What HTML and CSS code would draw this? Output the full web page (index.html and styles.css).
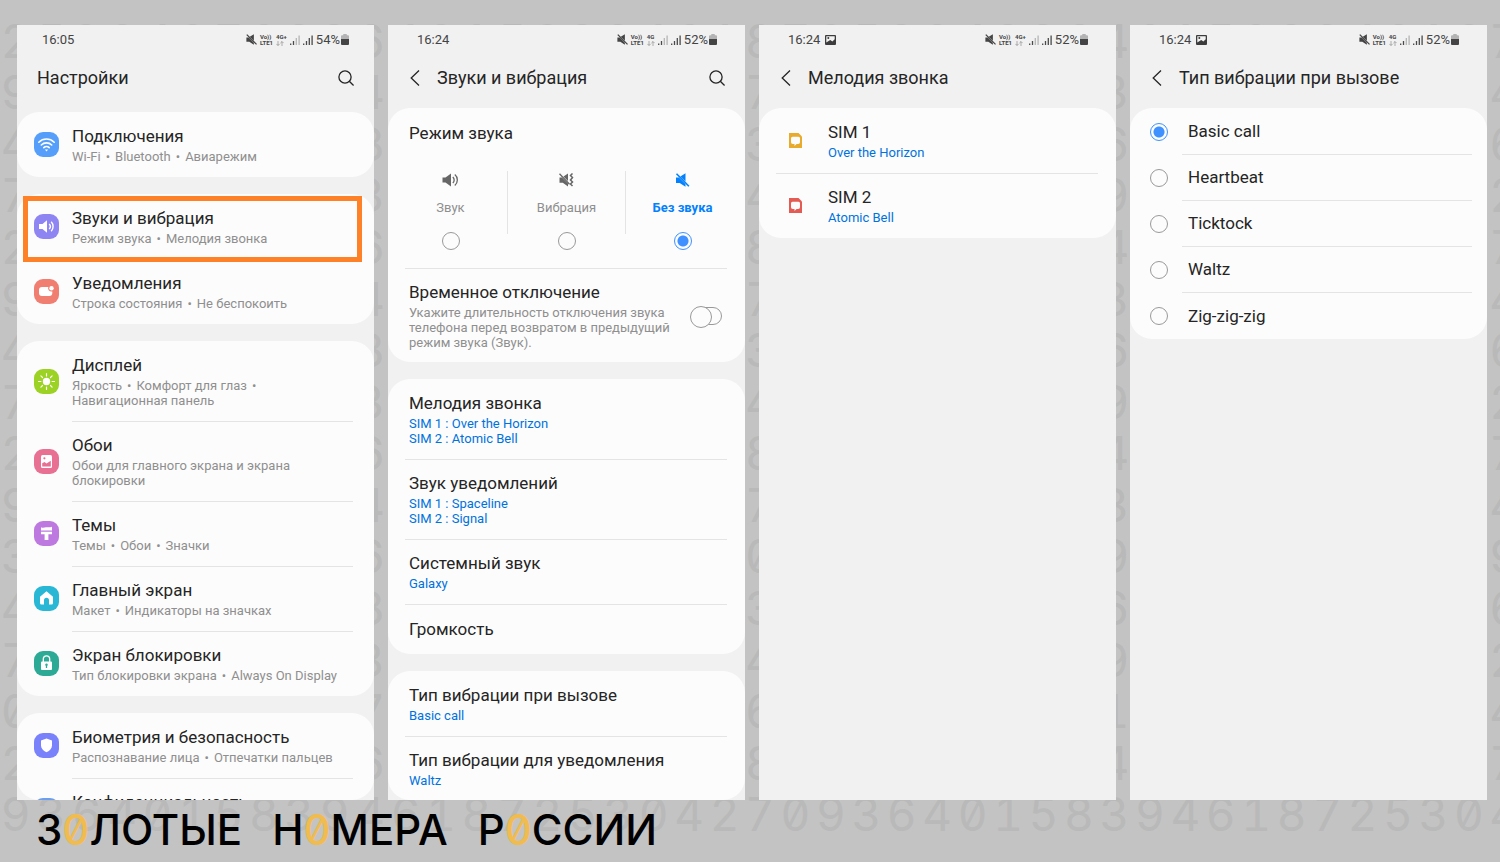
FILE: index.html
```html
<!DOCTYPE html>
<html lang="ru">
<head>
    <meta charset="UTF-8">
    <meta name="viewport" content="width=device-width, initial-scale=1.0">
    <title>Звуки и вибрация</title>
    <link rel="stylesheet" href="styles.css">
</head>
<body>
    <!-- Shared icons -->
    <svg class="sprite" aria-hidden="true">
        <symbol id="mute" viewBox="0 0 14 14">
            <path d="M0.5 4.6h3L10 11v2.8L4.2 10H0.5z" fill="currentColor"/>
            <path d="M4.8 3.6L10 0.2v8.4z" fill="currentColor"/>
            <path d="M1 0.8l12.4 12.4" stroke="currentColor" stroke-width="1.6"/>
        </symbol>
        <symbol id="signal" viewBox="0 0 10 10">
            <path d="M0.7 10V8.4M3.5 10V6" stroke="#4a4a4a" stroke-width="1.3"/>
            <path d="M6.3 10V3M9.1 10V0.5" stroke="currentColor" stroke-width="1.3"/>
        </symbol>
        <symbol id="arrows" viewBox="0 0 8 5">
            <path d="M2 0v4.4M0.4 2.9L2 4.5l1.6-1.6M6 5V0.6M4.4 2.1L6 0.5l1.6 1.6" fill="none" stroke="#8c8c8c" stroke-width="0.7"/>
        </symbol>
        <symbol id="battery" viewBox="0 0 8 11">
            <path d="M2.3 0h3.4v1.2H7a1 1 0 0 1 1 1V6H0V2.2a1 1 0 0 1 1-1h1.3z" fill="#b3b3b3"/>
            <path d="M0 5h8v5a1 1 0 0 1-1 1H1a1 1 0 0 1-1-1z" fill="#444"/>
        </symbol>
        <symbol id="picture" viewBox="0 0 11 10">
            <path d="M1 0h9a1 1 0 0 1 1 1v8a1 1 0 0 1-1 1H1a1 1 0 0 1-1-1V1a1 1 0 0 1 1-1z" fill="#3c3c3c"/>
            <path d="M1.3 1.2h8.4v3L7.4 6.6 5.2 5 1.3 7.4z" fill="#f2f2f2"/>
            <circle cx="3.3" cy="3" r="1" fill="#3c3c3c"/>
        </symbol>
        <symbol id="search" viewBox="0 0 16 16">
            <circle cx="7" cy="7" r="6.1" fill="none" stroke="#252525" stroke-width="1.3"/>
            <path d="M11.3 11.3l4.3 4.2" stroke="#252525" stroke-width="1.4"/>
        </symbol>
        <symbol id="back" viewBox="0 0 10 16">
            <path d="M9 0.5L1.2 8 9 15.5" fill="none" stroke="#252525" stroke-width="1.3"/>
        </symbol>
        <symbol id="sim" viewBox="0 0 13 15">
            <path d="M0 0h9.5L13 3.5V15H0z" fill="currentColor"/>
            <path d="M3.5 3.8h6A1.5 1.5 0 0 1 11 5.300v4a1.8 1.8 0 0 1-1.8 1.8H7.6l-2.1 1.8v-1.8H3.8A1.8 1.8 0 0 1 2 9.3v-4a1.5 1.5 0 0 1 1.5-1.5z" fill="#fcfcfc"/>
        </symbol>
    </svg>

    <!-- Digits behind the screens -->
    <div class="pattern" id="pattern" aria-hidden="true"></div>

    <main class="screens">
        <!-- Screen 1: settings list -->
        <section class="phone phone-main">
            <div class="status">
                <span>16:05</span>
                <div class="status-icons">
                    <svg class="i-mute"><use href="#mute"/></svg>
                    <span class="tiny">Vo))<br>LTE1</span>
                    <span class="tiny">4G+<svg class="i-arrows"><use href="#arrows"/></svg></span>
                    <svg class="i-signal weak"><use href="#signal"/></svg>
                    <svg class="i-signal"><use href="#signal"/></svg>
                    <span class="percent">54%</span>
                    <svg class="i-battery"><use href="#battery"/></svg>
                </div>
            </div>
            <header>
                <h2>Настройки</h2>
                <button class="icon-btn search" aria-label="Поиск"><svg><use href="#search"/></svg></button>
            </header>

            <div class="card icons">
                <a class="row" href="#">
                    <svg class="app" viewBox="0 0 25 25"><rect width="25" height="25" rx="9" fill="#559ffb"/><path d="M4.8 10.2a11 11 0 0 1 15.4 0M7.3 13a7.4 7.4 0 0 1 10.4 0M9.8 15.6a3.9 3.9 0 0 1 5.4 0" fill="none" stroke="#fff" stroke-width="1.6" stroke-linecap="round"/><path d="M10.9 17.5h3.2l-1.6 1.9z" fill="#fff"/></svg>
                    <div><h3>Подключения</h3><p>Wi-Fi<i>•</i>Bluetooth<i>•</i>Авиарежим</p></div>
                </a>
            </div>

            <div class="card icons">
                <a class="row selected" href="#">
                    <svg class="app" viewBox="0 0 25 25"><rect width="25" height="25" rx="9" fill="#8e85f3"/><path d="M5 10h3.5l4.5-3.7v12.4L8.5 15H5z" fill="#fff"/><path d="M15.2 10a3.6 3.6 0 0 1 0 5M17.2 7.8a6.8 6.8 0 0 1 0 9.4" fill="none" stroke="#fff" stroke-width="1.4"/></svg>
                    <div><h3>Звуки и вибрация</h3><p>Режим звука<i>•</i>Мелодия звонка</p></div>
                </a>
                <a class="row plain" href="#">
                    <svg class="app" viewBox="0 0 25 25"><rect width="25" height="25" rx="9" fill="#f07f72"/><path d="M8 8h6.3a3.4 3.4 0 0 0 4 4.5V14a3 3 0 0 1-3 3H8a3 3 0 0 1-3-3v-3a3 3 0 0 1 3-3z" fill="#fff"/><circle cx="17.5" cy="9.2" r="2.2" fill="#fff"/></svg>
                    <div><h3>Уведомления</h3><p>Строка состояния<i>•</i>Не беспокоить</p></div>
                </a>
            </div>

            <div class="card icons">
                <a class="row" href="#">
                    <svg class="app" viewBox="0 0 25 25"><rect width="25" height="25" rx="9" fill="#9bd223"/><circle cx="12.5" cy="12.5" r="3.7" fill="#fff"/><path d="M12.5 4.5v2.4M12.5 18.1v2.4M4.5 12.5h2.4M18.1 12.5h2.4M6.9 6.9l1.6 1.6M16.5 16.5l1.6 1.6M6.9 18.1l1.6-1.6M16.5 8.5l1.6-1.6" stroke="#fff" stroke-width="1.2" stroke-linecap="round"/></svg>
                    <div><h3>Дисплей</h3><p>Яркость<i>•</i>Комфорт для глаз<i>•</i><br>Навигационная панель</p></div>
                </a>
                <a class="row" href="#">
                    <svg class="app" viewBox="0 0 25 25"><rect width="25" height="25" rx="9" fill="#e87092"/><rect x="7" y="6" width="11" height="13" rx="1.5" fill="#fff"/><circle cx="10.4" cy="9.3" r="1.1" fill="#e87092"/><path d="M8.2 17.5v-3.2l2.3-1.4 2 1.6 4.3-2.8v5.8z" fill="#e87092"/></svg>
                    <div><h3>Обои</h3><p>Обои для главного экрана и экрана блокировки</p></div>
                </a>
                <a class="row" href="#">
                    <svg class="app" viewBox="0 0 25 25"><rect width="25" height="25" rx="9" fill="#bd79df"/><path d="M7 6.3c2 1 3.5 0.2 5 0s4 0.3 6-0.5v3.7H7zM7 10.7h11v2.5h-3.6V19h-3.8v-5.8H7z" fill="#fff"/></svg>
                    <div><h3>Темы</h3><p>Темы<i>•</i>Обои<i>•</i>Значки</p></div>
                </a>
                <a class="row" href="#">
                    <svg class="app" viewBox="0 0 25 25"><rect width="25" height="25" rx="9" fill="#29b7d6"/><path d="M12.5 5.2L19 10.8V17a1.5 1.5 0 0 1-1.5 1.5H15v-4.2a2.5 2.5 0 0 0-5 0v4.2H7.5A1.5 1.5 0 0 1 6 17v-6.2z" fill="#fff"/></svg>
                    <div><h3>Главный экран</h3><p>Макет<i>•</i>Индикаторы на значках</p></div>
                </a>
                <a class="row" href="#">
                    <svg class="app" viewBox="0 0 25 25"><rect width="25" height="25" rx="9" fill="#2caa96"/><path d="M9.3 11V8a3.2 3.2 0 0 1 6.4 0v3" fill="none" stroke="#fff" stroke-width="1.3"/><rect x="7" y="10.5" width="11" height="8.5" rx="1" fill="#fff"/><path d="M12.5 13v4" stroke="#2caa96" stroke-width="1.3"/><circle cx="12.5" cy="13.7" r="1.2" fill="#2caa96"/></svg>
                    <div><h3>Экран блокировки</h3><p>Тип блокировки экрана<i>•</i>Always On Display</p></div>
                </a>
            </div>

            <div class="card icons cut">
                <a class="row" href="#">
                    <svg class="app" viewBox="0 0 25 25"><rect width="25" height="25" rx="9" fill="#7a82fb"/><path d="M12.5 5.5l5.5 2v4.8c0 3.3-2 5.3-5.5 7-3.5-1.7-5.5-3.7-5.5-7V7.5z" fill="#fff"/></svg>
                    <div><h3>Биометрия и безопасность</h3><p>Распознавание лица<i>•</i>Отпечатки пальцев</p></div>
                </a>
                <a class="row" href="#">
                    <svg class="app" viewBox="0 0 25 25"><rect width="25" height="25" rx="9" fill="#6d9ff0"/></svg>
                    <div><h3>Конфиденциальность</h3><p>Диспетчер разрешений</p></div>
                </a>
            </div>
        </section>

        <!-- Screen 2: sounds and vibration -->
        <section class="phone">
            <div class="status">
                <span>16:24</span>
                <div class="status-icons">
                    <svg class="i-mute"><use href="#mute"/></svg>
                    <span class="tiny">Vo))<br>LTE1</span>
                    <span class="tiny">4G<svg class="i-arrows"><use href="#arrows"/></svg></span>
                    <svg class="i-signal weak"><use href="#signal"/></svg>
                    <svg class="i-signal"><use href="#signal"/></svg>
                    <span class="percent">52%</span>
                    <svg class="i-battery"><use href="#battery"/></svg>
                </div>
            </div>
            <header>
                <button class="icon-btn back" aria-label="Назад"><svg><use href="#back"/></svg></button>
                <h2>Звуки и вибрация</h2>
                <button class="icon-btn search" aria-label="Поиск"><svg><use href="#search"/></svg></button>
            </header>

            <div class="card">
                <h3 class="mode-title">Режим звука</h3>
                <div class="modes">
                    <label>
                        <svg viewBox="0 0 17 14"><path d="M0.5 4.5h3L9 0.5v13l-5.500-4h-3z" fill="currentColor"/><path d="M10.8 4a4 4 0 0 1 0 6M12.8 1.6a7 7 0 0 1 0 10.8" fill="none" stroke="currentColor" stroke-width="1.3"/></svg>
                        <span>Звук</span>
                        <input type="radio" name="mode">
                    </label>
                    <label>
                        <svg viewBox="0 0 17 14"><path d="M1.5 4.6H4l6 6v3L4.8 9.8H1.5zM5.5 3.4l4.5-3V8z" fill="currentColor"/><path d="M1.5 0.8l10 10.5" stroke="currentColor" stroke-width="1.3"/><path d="M14.5 0.5l-2 2 2 2-2 2.5 2 2-2 2 2 2" fill="none" stroke="currentColor" stroke-width="1.5"/></svg>
                        <span>Вибрация</span>
                        <input type="radio" name="mode">
                    </label>
                    <label class="on">
                        <svg><use href="#mute"/></svg>
                        <span>Без звука</span>
                        <input type="radio" name="mode" checked>
                    </label>
                </div>
                <label class="row toggle-row">
                    <div><h3>Временное отключение</h3><p>Укажите длительность отключения звука телефона перед возвратом в предыдущий режим звука (Звук).</p></div>
                    <input type="checkbox" class="toggle">
                </label>
            </div>

            <div class="card">
                <a class="row" href="#"><div><h3>Мелодия звонка</h3><p class="value">SIM 1 : Over the Horizon<br>SIM 2 : Atomic Bell</p></div></a>
                <a class="row" href="#"><div><h3>Звук уведомлений</h3><p class="value">SIM 1 : Spaceline<br>SIM 2 : Signal</p></div></a>
                <a class="row" href="#"><div><h3>Системный звук</h3><p class="value">Galaxy</p></div></a>
                <a class="row" href="#"><div><h3>Громкость</h3></div></a>
            </div>

            <div class="card cut">
                <a class="row" href="#"><div><h3>Тип вибрации при вызове</h3><p class="value">Basic call</p></div></a>
                <a class="row" href="#"><div><h3>Тип вибрации для уведомления</h3><p class="value">Waltz</p></div></a>
            </div>
        </section>

        <!-- Screen 3: ringtone -->
        <section class="phone">
            <div class="status">
                <span>16:24</span>
                <svg class="i-picture"><use href="#picture"/></svg>
                <div class="status-icons">
                    <svg class="i-mute"><use href="#mute"/></svg>
                    <span class="tiny">Vo))<br>LTE1</span>
                    <span class="tiny">4G+<svg class="i-arrows"><use href="#arrows"/></svg></span>
                    <svg class="i-signal weak"><use href="#signal"/></svg>
                    <svg class="i-signal"><use href="#signal"/></svg>
                    <span class="percent">52%</span>
                    <svg class="i-battery"><use href="#battery"/></svg>
                </div>
            </div>
            <header>
                <button class="icon-btn back" aria-label="Назад"><svg><use href="#back"/></svg></button>
                <h2>Мелодия звонка</h2>
            </header>
            <div class="card sims">
                <a class="row" href="#"><svg class="sim sim-1"><use href="#sim"/></svg><div><h3>SIM 1</h3><p class="value">Over the Horizon</p></div></a>
                <a class="row" href="#"><svg class="sim sim-2"><use href="#sim"/></svg><div><h3>SIM 2</h3><p class="value">Atomic Bell</p></div></a>
            </div>
        </section>

        <!-- Screen 4: vibration type -->
        <section class="phone">
            <div class="status">
                <span>16:24</span>
                <svg class="i-picture"><use href="#picture"/></svg>
                <div class="status-icons">
                    <svg class="i-mute"><use href="#mute"/></svg>
                    <span class="tiny">Vo))<br>LTE1</span>
                    <span class="tiny">4G<svg class="i-arrows"><use href="#arrows"/></svg></span>
                    <svg class="i-signal weak"><use href="#signal"/></svg>
                    <svg class="i-signal"><use href="#signal"/></svg>
                    <span class="percent">52%</span>
                    <svg class="i-battery"><use href="#battery"/></svg>
                </div>
            </div>
            <header>
                <button class="icon-btn back" aria-label="Назад"><svg><use href="#back"/></svg></button>
                <h2>Тип вибрации при вызове</h2>
            </header>
            <div class="card choices">
                <label><input type="radio" name="vibration" checked><span>Basic call</span></label>
                <label><input type="radio" name="vibration"><span>Heartbeat</span></label>
                <label><input type="radio" name="vibration"><span>Ticktock</span></label>
                <label><input type="radio" name="vibration"><span>Waltz</span></label>
                <label><input type="radio" name="vibration"><span>Zig-zig-zig</span></label>
            </div>
        </section>
    </main>

    <footer class="brand">
        <span>З<b>0</b>ЛОТЫЕ</span>
        <span>Н<b>0</b>МЕРА</span>
        <span>Р<b>0</b>ССИИ</span>
    </footer>

    <script>
        // every row is a shifted piece of the same digit sequence
        const digits = '9364015839461872530427093640158394618725304';
        const starts = [15, 0, 3, 21, 15, 0, 3, 21, 15, 0, 1, 3, 21, 4, 15, 0];
        const pattern = document.getElementById('pattern');

        starts.forEach((start) => {
            for (let i = 0; i < digits.length; i++) {
                const cell = document.createElement('span');
                cell.textContent = digits[(start + i) % digits.length];
                pattern.appendChild(cell);
            }
        });
    </script>
</body>
</html>
```

FILE: styles.css
```css
* {
    box-sizing: border-box;
    margin: 0;
    padding: 0;
}

body {
    min-height: 100vh;
    position: relative;
    overflow: hidden;
    background: #c3c3c3;
    color: #252525;
    font-family: Roboto, Arial, sans-serif;
}

.sprite {
    display: none;
}

svg {
    display: block;
    flex: none;
}

a {
    color: inherit;
    text-decoration: none;
}

/* background digits */
.pattern {
    position: absolute;
    top: 15px;
    bottom: 22px;
    left: -2px;
    right: -22px;
    display: grid;
    grid-template-columns: repeat(43, 1fr);
    grid-auto-rows: 1fr;
    align-items: center;
    justify-items: center;
    color: #b9b9b9;
    font: 400 46px/50px Inter, sans-serif;
    font-feature-settings: "tnum", "zero";
}

.screens {
    position: relative;
    display: grid;
    grid-template-columns: repeat(4, 1fr);
    gap: 14px;
    height: calc(100vh - 62px);
    padding: 25px 13px 0 17px;
}

.phone {
    display: flex;
    flex-direction: column;
    min-width: 0;
    min-height: 0;
    overflow: hidden;
    background: #f1f1f1;
}

/* status bar */
.status {
    display: flex;
    align-items: center;
    flex: none;
    height: 29px;
    padding: 0 28px 0 29px;
    color: #444;
    font-size: 13px;
}

.phone-main .status {
    padding: 0 25px;
}

.status-icons {
    display: flex;
    align-items: center;
    gap: 3px;
    margin-left: auto;
}

.i-mute {
    width: 11px;
    height: 11px;
}

.tiny {
    font-size: 6px;
    font-weight: 700;
    line-height: 6px;
}

.i-arrows {
    width: 8px;
    height: 5px;
    margin-top: 1px;
}

.i-signal {
    width: 10px;
    height: 10px;
    margin-top: 1px;
    color: #4a4a4a;
}

.i-signal.weak {
    color: #b5b5b5;
}

.i-battery {
    width: 8px;
    height: 11px;
    margin-left: -2px;
}

.i-picture {
    width: 11px;
    height: 10px;
    margin-left: 5px;
}

/* title bar */
header {
    display: flex;
    align-items: center;
    flex: none;
    height: 48px;
    margin-bottom: 6px;
    padding: 0 20px 0 22px;
}

.phone-main header {
    margin-bottom: 10px;
    padding-left: 20px;
}

h2 {
    padding-bottom: 2px;
    font-size: 18px;
    font-weight: 400;
}

.icon-btn {
    border: none;
    background: none;
    cursor: pointer;
}

.search {
    margin-left: auto;
}

.search svg {
    width: 16px;
    height: 16px;
}

.back {
    margin-right: 17px;
}

.back svg {
    width: 10px;
    height: 16px;
}

/* cards and rows */
.card {
    flex: none;
    border-radius: 22px;
    background: #fcfcfc;
}

.card + .card {
    margin-top: 17px;
}

.card.cut {
    flex: 1;
    min-height: 0;
    overflow: hidden;
}

.row {
    position: relative;
    display: flex;
    align-items: center;
    min-height: 50px;
    padding: 13px 21px;
}

.row + .row::before,
.toggle-row::before {
    content: "";
    position: absolute;
    top: 0;
    left: 17px;
    right: 18px;
    height: 1px;
    background: #e4e4e4;
}

h3 {
    font-size: 17px;
    font-weight: 400;
    line-height: 22px;
}

.row p {
    margin-top: 2px;
    color: #8f8f8f;
    font-size: 13px;
    line-height: 15px;
}

.row p.value {
    color: #0072de;
}

.row i {
    margin: 0 5px;
    font-style: normal;
}

.icons .row {
    gap: 13px;
    padding-left: 17px;
}

.icons .row::before {
    left: 55px;
    right: 21px;
}

.icons .row.plain::before {
    display: none;
}

.app {
    width: 25px;
    height: 25px;
}

.selected::after {
    content: "";
    position: absolute;
    z-index: 1;
    top: 2px;
    bottom: -3px;
    left: 6px;
    right: 12px;
    border: 5px solid #ff8127;
}

/* radio buttons */
input[type="radio"] {
    appearance: none;
    flex: none;
    width: 18px;
    height: 18px;
    border: 1px solid #999;
    border-radius: 50%;
}

input[type="radio"]:checked {
    border-color: #3e91ff;
    background: radial-gradient(circle, #3e91ff 5px, transparent 6px);
}

/* sound mode */
.mode-title {
    padding: 14px 21px 0;
}

.modes {
    display: grid;
    grid-template-columns: 1fr 119px 1fr;
    height: 124px;
    padding: 27px 6px 0;
}

.modes label {
    display: flex;
    flex-direction: column;
    align-items: center;
    height: 63px;
    padding-top: 2px;
    color: #666;
    font-size: 13px;
}

.modes label:nth-child(2) {
    border-left: 1px solid #e4e4e4;
    border-right: 1px solid #e4e4e4;
}

.modes svg {
    width: 17px;
    height: 14px;
}

.modes span {
    margin: 13px 0 17px;
    color: #8f8f8f;
    line-height: 15px;
}

.modes .on,
.modes .on span {
    color: #0381fe;
    font-weight: 700;
}

.toggle-row {
    padding-bottom: 12px;
}

.toggle-row div {
    flex: 1;
    padding-right: 20px;
}

.toggle {
    appearance: none;
    position: relative;
    flex: none;
    width: 31px;
    height: 18px;
    margin-right: 2px;
    border: 1px solid #999;
    border-radius: 9px;
}

.toggle::before {
    content: "";
    position: absolute;
    top: -2px;
    left: -2px;
    width: 20px;
    height: 20px;
    border: 1px solid #999;
    border-radius: 50%;
    background: #fcfcfc;
}

/* sim list */
.sims .row {
    gap: 26px;
    padding-left: 30px;
}

.sim {
    width: 13px;
    height: 15px;
}

.sim-1 {
    color: #e8ab2b;
}

.sim-2 {
    color: #e35b52;
}

/* vibration list */
.choices {
    padding-top: 1px;
}

.choices label {
    display: flex;
    align-items: center;
    gap: 14px;
    height: 46px;
    padding: 0 15px 0 20px;
}

.choices span {
    flex: 1;
    padding-left: 6px;
    border-bottom: 1px solid #e4e4e4;
    font-size: 17px;
    line-height: 45px;
}

.choices label:last-child span {
    border: none;
}

/* brand line */
.brand {
    position: relative;
    display: flex;
    gap: 30px;
    padding: 5px 36px 0;
    color: #000;
    font: 500 42px/50px Inter, sans-serif;
    font-feature-settings: "zero";
}

.brand b {
    color: #f0bb4f;
    font-weight: 500;
}
```
